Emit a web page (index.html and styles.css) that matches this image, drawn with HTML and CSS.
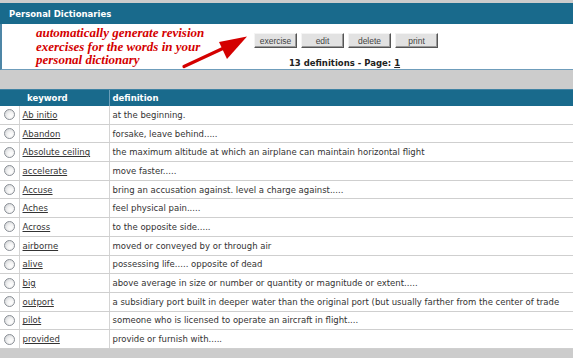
FILE: index.html
```html
<!DOCTYPE html>
<html>
<head>
<meta charset="utf-8">
<link rel="stylesheet" href="styles.css">
</head>
<body>
<div class="page">
  <div class="titlebar">Personal Dictionaries</div>
  <div class="panel">
    <div class="promo">automatically generate revision<br>exercises for the words in your<br>personal dictionary</div>
    <div class="actions">
      <div class="buttons">
        <button class="btn">exercise</button>
        <button class="btn">edit</button>
        <button class="btn">delete</button>
        <button class="btn">print</button>
      </div>
      <div class="pageinfo">13 definitions - Page: <a href="#">1</a></div>
    </div>
    <svg class="arrow" width="90" height="45" viewBox="170 30 90 45">
      <line x1="184" y1="67.5" x2="226" y2="48" stroke="#d40000" stroke-width="3.2" stroke-linecap="round"/>
      <polygon points="247,37.5 219,43 227,60" fill="#d40000"/>
    </svg>
  </div>
  <div class="band"></div>
  <table class="dict">
    <colgroup><col class="c-radio"><col class="c-key"><col></colgroup>
    <thead>
      <tr><th class="h-radio"></th><th class="h-key">keyword</th><th class="h-def">definition</th></tr>
    </thead>
    <tbody>
      <tr><td><span class="radio"></span></td><td><a href="#">Ab initio</a></td><td>at the beginning.</td></tr>
      <tr><td><span class="radio"></span></td><td><a href="#">Abandon</a></td><td>forsake, leave behind.....</td></tr>
      <tr><td><span class="radio"></span></td><td><a href="#">Absolute ceiling</a></td><td>the maximum altitude at which an airplane can maintain horizontal flight</td></tr>
      <tr><td><span class="radio"></span></td><td><a href="#">accelerate</a></td><td>move faster.....</td></tr>
      <tr><td><span class="radio"></span></td><td><a href="#">Accuse</a></td><td>bring an accusation against. level a charge against.....</td></tr>
      <tr><td><span class="radio"></span></td><td><a href="#">Aches</a></td><td>feel physical pain.....</td></tr>
      <tr><td><span class="radio"></span></td><td><a href="#">Across</a></td><td>to the opposite side.....</td></tr>
      <tr><td><span class="radio"></span></td><td><a href="#">airborne</a></td><td>moved or conveyed by or through air</td></tr>
      <tr><td><span class="radio"></span></td><td><a href="#">alive</a></td><td>possessing life..... opposite of dead</td></tr>
      <tr><td><span class="radio"></span></td><td><a href="#">big</a></td><td>above average in size or number or quantity or magnitude or extent.....</td></tr>
      <tr><td><span class="radio"></span></td><td><a href="#">outport</a></td><td>a subsidiary port built in deeper water than the original port (but usually farther from the center of trade</td></tr>
      <tr><td><span class="radio"></span></td><td><a href="#">pilot</a></td><td>someone who is licensed to operate an aircraft in flight....</td></tr>
      <tr><td><span class="radio"></span></td><td><a href="#">provided</a></td><td>provide or furnish with.....</td></tr>
    </tbody>
  </table>
</div>
</body>
</html>
```

FILE: styles.css
```css
html, body {
  margin: 0;
  padding: 0;
  background: #cccccc;
}
.page {
  width: 573px;
  height: 358px;
  overflow: hidden;
  padding-top: 3px;
  box-sizing: border-box;
  font-family: "DejaVu Sans", Verdana, sans-serif;
}
.titlebar {
  height: 21px;
  background: #196a8c;
  color: #ffffff;
  font-weight: bold;
  font-size: 8.5px;
  line-height: 22px;
  padding-left: 9px;
  box-sizing: border-box;
}
.panel {
  position: relative;
  height: 46px;
  background: #ffffff;
  border-left: 2px solid #4d86a6;
  border-bottom: 1px solid #6f9dbb;
  box-sizing: border-box;
  display: flex;
  align-items: flex-start;
}
.promo {
  font-family: "Liberation Serif", "Times New Roman", serif;
  font-weight: bold;
  font-style: italic;
  font-size: 13px;
  line-height: 13.5px;
  color: #d40000;
  margin-left: 34px;
  padding-top: 2px;
  width: 200px;
}
.actions {
  margin-left: 15px;
  display: flex;
  flex-direction: column;
  align-items: center;
  width: 190px;
}
.buttons {
  display: flex;
  gap: 4px;
  margin-top: 9px;
}
.btn {
  width: 43px;
  height: 15px;
  padding: 0;
  font-family: "Liberation Sans", Arial, sans-serif;
  font-size: 8.5px;
  color: #444444;
  background: #e2e2e2;
  border: 1px solid;
  border-color: #f4f4f4 #555555 #555555 #f4f4f4;
  box-shadow: inset -1px -1px 0 #999999;
}
.pageinfo {
  margin-top: 10px;
  font-weight: bold;
  font-size: 8.5px;
  color: #222222;
  margin-left: -3px;
}
.pageinfo a {
  color: #222222;
}
.arrow {
  position: absolute;
  left: 168px;
  top: 5px;
}
.band {
  height: 19px;
}
.dict {
  width: 573px;
  border-collapse: collapse;
  table-layout: fixed;
  font-size: 8.5px;
  color: #333333;
  background: #ffffff;
}
.c-radio { width: 19px; }
.c-key { width: 90px; }
.dict th {
  background: #196a8c;
  color: #ffffff;
  font-weight: bold;
  font-size: 8.5px;
  height: 16px;
  text-align: left;
  padding: 0;
  border-top: 1px solid #3f82a3;
}
.dict th.h-key {
  padding-left: 8px;
}
.dict th.h-def {
  padding-left: 3px;
  border-left: 1px solid #6c9fba;
}
.dict td {
  height: 17.7px;
  padding: 0 0 0 3px;
  border-bottom: 1px solid #cfcfcf;
  white-space: nowrap;
  overflow: hidden;
}
.dict td:first-child {
  padding: 0 0 0 4px;
}
.dict td + td {
  border-left: 1px solid #d4d4d4;
}
.dict td a {
  color: #333333;
}
.radio {
  display: block;
  width: 11px;
  height: 11px;
  box-sizing: border-box;
  border-radius: 50%;
  border: 1px solid #8a8f96;
  background: radial-gradient(circle at 65% 65%, #ffffff 0%, #f2f2f2 40%, #c9ccd0 100%);
}
```
